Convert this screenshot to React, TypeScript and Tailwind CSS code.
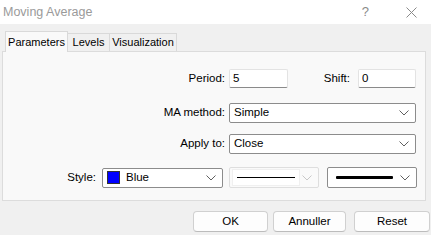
import React from "react";

const Chevron = ({ color = "#606060" }: { color?: string }) => (
  <svg width="10" height="6" viewBox="0 0 10 6" className="shrink-0">
    <path d="M0.5 0.5 L5 5 L9.5 0.5" fill="none" stroke={color} strokeWidth="1" />
  </svg>
);

const Select = ({ w, children }: { w: string; children: React.ReactNode }) => (
  <div className={`${w} h-[20px] bg-white border border-[#8c8c8c] rounded-[2px] flex items-center pl-[4px] pr-[6px]`}>
    <div className="flex-1 flex items-center min-w-0">{children}</div>
    <Chevron />
  </div>
);

export default function App() {
  return (
    <div
      className="w-[431px] h-[235px] bg-[#f0f0f0] overflow-hidden text-[11.5px] text-black"
      style={{ fontFamily: '"Liberation Sans", Arial, sans-serif' }}
    >
      {/* Title bar */}
      <div className="h-[24px] bg-white flex items-center">
        <span className="pl-[3px] text-[12.5px] text-[#9a9a9a] flex-1">Moving Average</span>
        <span className="text-[#8a8a8a] text-[13px] mr-[37px]">?</span>
        <svg width="11" height="11" viewBox="0 0 11 11" className="mr-[14px]">
          <path d="M0.5 0.5 L10.5 10.5 M10.5 0.5 L0.5 10.5" stroke="#8a8a8a" strokeWidth="1" />
        </svg>
      </div>

      {/* Tabs */}
      <div className="flex items-end h-[27px] pl-[5px] text-[11px]">
        <div className="h-[21px] bg-[#f9f9f9] border border-b-0 border-[#d9d9d9] flex items-center justify-center relative top-[1px] w-[63px]">
          Parameters
        </div>
        <div className="h-[18px] w-[42px] border border-l-0 border-b-0 border-[#d9d9d9] bg-[#f0f0f0] flex items-center justify-center">
          Levels
        </div>
        <div className="h-[18px] w-[67px] border border-l-0 border-b-0 border-[#d9d9d9] bg-[#f0f0f0] flex items-center justify-center">
          Visualization
        </div>
      </div>

      {/* Panel */}
      <div className="ml-[2px] w-[424px] h-[150px] bg-[#f9f9f9] border border-[#dcdcdc] flex flex-col pt-[17px]">
        {/* Row 1 */}
        <div className="flex items-center h-[19px]">
          <div className="w-[222px] text-right">Period:</div>
          <div className="ml-[4px] w-[59px] h-[19px] bg-white border border-[#e3e3e3] border-b-[#8a8a8a] rounded-[2px] flex items-center pl-[3px]">
            5
          </div>
          <div className="w-[62px] text-right">Shift:</div>
          <div className="ml-[8px] w-[58px] h-[19px] bg-white border border-[#e3e3e3] border-b-[#8a8a8a] rounded-[2px] flex items-center pl-[3px]">
            0
          </div>
        </div>

        {/* Row 2 */}
        <div className="flex items-center h-[20px] mt-[15px]">
          <div className="w-[222px] text-right">MA method:</div>
          <div className="ml-[4px]">
            <Select w="w-[187px]">Simple</Select>
          </div>
        </div>

        {/* Row 3 */}
        <div className="flex items-center h-[20px] mt-[11px]">
          <div className="w-[222px] text-right">Apply to:</div>
          <div className="ml-[4px]">
            <Select w="w-[187px]">Close</Select>
          </div>
        </div>

        {/* Row 4 */}
        <div className="flex items-center h-[21px] mt-[13px]">
          <div className="w-[93px] text-right">Style:</div>
          <div className="ml-[6px]">
            <Select w="w-[121px]">
              <span className="w-[13px] h-[13px] bg-[#0000ff] border border-[#333] mr-[6px]" />
              Blue
            </Select>
          </div>
          <div className="ml-[6px] w-[90px] h-[21px] bg-[#fafafa] border border-[#dedede] rounded-[2px] flex items-center pl-[2px] pr-[6px]">
            <div className="w-[68px] h-[17px] bg-white border border-[#f0f0f0] flex items-center px-[4px]">
              <div className="w-full h-[1px] bg-black" />
            </div>
            <div className="flex-1" />
            <Chevron color="#c8c8c8" />
          </div>
          <div className="ml-[8px] w-[90px] h-[21px] bg-white border border-[#8c8c8c] rounded-[2px] flex items-center pl-[8px] pr-[6px]">
            <div className="w-[57px] h-[3px] bg-black rounded-[1px]" />
            <div className="flex-1" />
            <Chevron />
          </div>
        </div>
      </div>

      {/* Buttons */}
      <div className="flex mt-[10px] pl-[193px] gap-[5px]">
        <button className="w-[75px] h-[21px] bg-[#fdfdfd] border border-[#d0d0d0] border-b-[#bcbcbc] rounded-[4px]">OK</button>
        <button className="w-[73px] h-[21px] bg-[#fdfdfd] border border-[#d0d0d0] border-b-[#bcbcbc] rounded-[4px]">Annuller</button>
        <button className="w-[76px] h-[21px] bg-[#fdfdfd] border border-[#d0d0d0] border-b-[#bcbcbc] rounded-[4px] ml-[3px]">Reset</button>
      </div>
    </div>
  );
}
